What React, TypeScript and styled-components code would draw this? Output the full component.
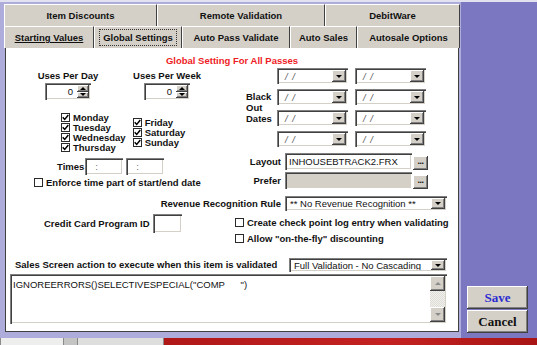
import React from "react";
import styled, { createGlobalStyle } from "styled-components";

const GlobalStyle = createGlobalStyle`
  html, body {
    margin: 0;
    padding: 0;
  }
  body {
    width: 537px;
    height: 345px;
    overflow: hidden;
    background: #7b77c0;
    font-family: "Liberation Sans", Arial, sans-serif;
    font-size: 9.5px;
    color: #111;
  }
`;

const raised = `
  background: #d4d0c8;
  box-shadow: inset -1px -1px #404040, inset 1px 1px #ffffff, inset -2px -2px #808080;
`;

const sunken = `
  background: #ffffff;
  box-shadow: inset 1px 1px #808080, inset 2px 2px #404040, inset -1px -1px #ffffff, inset -2px -2px #d4d0c8;
`;

const Screen = styled.div`
  width: 537px;
  height: 345px;
  display: flex;
  flex-direction: column;
  background: #7b77c0;
`;

const TopLine = styled.div`
  height: 2px;
  background: #e2e1ef;
`;

const Main = styled.div`
  height: 336px;
  display: flex;
`;

const Frame = styled.div`
  width: 461px;
  box-sizing: border-box;
  padding: 2px 0 0 4px;
  background: #aeacdb;
  display: flex;
  flex-direction: column;
`;

const TabRow = styled.div`
  display: flex;
  height: 22px;
  width: 456px;
`;

const Tab = styled.div<{ $w: number }>`
  width: ${(p) => p.$w}px;
  box-sizing: border-box;
  display: flex;
  align-items: center;
  justify-content: center;
  background: #d4d0c8;
  border-top: 1px solid #ffffff;
  border-left: 1px solid #ffffff;
  border-right: 1px solid #404040;
  font-weight: bold;
  white-space: nowrap;
`;

const TabText = styled.span<{ $underline?: boolean; $focus?: boolean }>`
  text-decoration: ${(p) => (p.$underline ? "underline" : "none")};
  border: 1px dotted ${(p) => (p.$focus ? "#333" : "transparent")};
  padding: 2px 3px;
`;

const Panel = styled.div`
  margin-left: 1px;
  width: 454px;
  height: 284px;
  box-sizing: border-box;
  background: #ffffff;
  border-left: 1px solid #404040;
  border-right: 1px solid #404040;
  border-bottom: 1px solid #404040;
  display: flex;
  flex-direction: column;
`;

const Title = styled.div`
  padding-top: 7px;
  line-height: 12px;
  text-align: center;
  color: #ee1c25;
  font-weight: bold;
`;

const TopGrid = styled.div`
  display: grid;
  grid-template-columns: 236px 1fr;
  height: 129px;
`;

const Column = styled.div`
  display: flex;
  flex-direction: column;
`;

const UsesRow = styled.div`
  display: flex;
  gap: 19px;
  padding: 3px 0 0 22px;
`;

const UsesGroup = styled.div`
  width: 80px;
  display: flex;
  flex-direction: column;
  align-items: center;
`;

const Label = styled.span`
  font-weight: bold;
  line-height: 12px;
  white-space: nowrap;
`;

const Spinner = styled.div`
  margin-top: 1px;
  width: 46px;
  height: 17px;
  box-sizing: border-box;
  ${sunken}
  display: flex;
  padding: 2px;
`;

const SpinValue = styled.span`
  flex: 1;
  text-align: right;
  padding-right: 4px;
  line-height: 13px;
`;

const SpinButtons = styled.div`
  width: 12px;
  display: flex;
  flex-direction: column;
`;

const SpinButton = styled.div`
  flex: 1;
  ${raised}
  display: flex;
  align-items: center;
  justify-content: center;
`;

const Arrow = styled.span<{ $dir: "up" | "down"; $color?: string }>`
  width: 0;
  height: 0;
  border-left: 3px solid transparent;
  border-right: 3px solid transparent;
  ${(p) =>
    p.$dir === "up"
      ? `border-bottom: 3px solid ${p.$color ?? "#000"};`
      : `border-top: 3px solid ${p.$color ?? "#000"};`}
`;

const DaysRow = styled.div`
  display: flex;
  gap: 7px;
  padding-left: 55px;
  margin-top: 12px;
`;

const DayColumn = styled.div<{ $offset?: number }>`
  display: flex;
  flex-direction: column;
  padding-top: ${(p) => p.$offset ?? 0}px;
`;

const CheckLine = styled.div<{ $h?: number }>`
  display: flex;
  align-items: center;
  gap: 3px;
  height: ${(p) => p.$h ?? 10}px;
  font-weight: bold;
  white-space: nowrap;
`;

const CheckBox = styled.span`
  width: 9px;
  height: 9px;
  box-sizing: border-box;
  border: 1px solid #2a2a2a;
  background: #ffffff;
  flex: none;
  display: flex;
  align-items: center;
  justify-content: center;
`;

const TimesRow = styled.div`
  display: flex;
  align-items: center;
  height: 17px;
  margin-top: 6px;
  padding-left: 51px;
`;

const TimeBox = styled.div<{ $gap: number }>`
  margin-left: ${(p) => p.$gap}px;
  width: 38px;
  height: 17px;
  box-sizing: border-box;
  ${sunken}
  color: #6a6a6a;
  line-height: 17px;
  padding-left: 10px;
`;

const EnforceRow = styled.div`
  margin-top: 1px;
  padding-left: 28px;
`;

const DatesBlock = styled.div`
  display: flex;
  align-items: center;
  margin-top: 1px;
  padding-left: 4px;
`;

const DatesLabel = styled.div`
  width: 31px;
  font-weight: bold;
  line-height: 11px;
`;

const DateGrid = styled.div`
  display: grid;
  grid-template-columns: 71px 71px;
  grid-auto-rows: 16px;
  column-gap: 7px;
  row-gap: 5px;
`;

const Combo = styled.div<{ $w?: number; $h?: number }>`
  width: ${(p) => (p.$w ? `${p.$w}px` : "auto")};
  height: ${(p) => p.$h ?? 16}px;
  box-sizing: border-box;
  ${sunken}
  display: flex;
  padding: 2px;
`;

const ComboText = styled.span<{ $muted?: boolean }>`
  flex: 1;
  padding-left: ${(p) => (p.$muted ? 6 : 3)}px;
  color: ${(p) => (p.$muted ? "#555" : "#111")};
  font-style: ${(p) => (p.$muted ? "italic" : "normal")};
  letter-spacing: ${(p) => (p.$muted ? "1px" : "0")};
  display: flex;
  align-items: center;
  white-space: nowrap;
  overflow: hidden;
`;

const DropButton = styled.div`
  width: 14px;
  ${raised}
  display: flex;
  align-items: center;
  justify-content: center;
`;

const FileRows = styled.div`
  display: flex;
  flex-direction: column;
  gap: 2px;
  margin-top: 6px;
`;

const FileRow = styled.div`
  display: flex;
  align-items: flex-end;
  height: 17px;
`;

const FileLabel = styled.span`
  width: 39px;
  margin-right: 4px;
  text-align: right;
  font-weight: bold;
  align-self: center;
`;

const FileInput = styled.div<{ $disabled?: boolean }>`
  width: 127px;
  height: 17px;
  box-sizing: border-box;
  ${sunken}
  background: ${(p) => (p.$disabled ? "#d4d0c8" : "#ffffff")};
  padding-left: 4px;
  line-height: 17px;
  white-space: nowrap;
`;

const BrowseButton = styled.div`
  margin-left: 1px;
  width: 15px;
  height: 14px;
  box-sizing: border-box;
  ${raised}
  font-weight: bold;
  font-size: 9px;
  line-height: 10px;
  text-align: center;
  letter-spacing: -0.5px;
`;

const RevenueRow = styled.div`
  display: flex;
  justify-content: flex-end;
  align-items: center;
  gap: 4px;
  height: 15px;
  padding-right: 11px;
`;

const CardRow = styled.div`
  display: flex;
  margin-top: 3px;
`;

const CardLeft = styled.div`
  width: 229px;
  box-sizing: border-box;
  padding-left: 38px;
  display: flex;
  gap: 3px;
`;

const CardLabel = styled.span`
  font-weight: bold;
  line-height: 19px;
`;

const IdBox = styled.div`
  width: 29px;
  height: 19px;
  ${sunken}
`;

const CardRight = styled.div`
  display: flex;
  flex-direction: column;
`;

const SalesRow = styled.div`
  display: flex;
  justify-content: space-between;
  align-items: center;
  height: 14px;
  margin-top: 12px;
  padding: 0 11px 0 9px;
`;

const ActionBox = styled.div`
  margin: 2px 0 0 4px;
  width: 437px;
  height: 50px;
  box-sizing: border-box;
  ${sunken}
  display: flex;
  padding: 2px;
`;

const ActionText = styled.div`
  flex: 1;
  padding: 3px 1px;
  white-space: pre;
`;

const ScrollBar = styled.div`
  width: 15px;
  display: flex;
  flex-direction: column;
  background: repeating-conic-gradient(#f2f1ee 0% 25%, #dedcd6 0% 50%) 0 0 / 2px 2px;
`;

const ScrollButton = styled.div<{ $push?: boolean }>`
  height: 15px;
  margin-top: ${(p) => (p.$push ? "auto" : "0")};
  ${raised}
  display: flex;
  align-items: center;
  justify-content: center;
`;

const SidePane = styled.div`
  flex: 1;
  display: flex;
  flex-direction: column;
  justify-content: flex-end;
  gap: 1px;
  padding: 0 0 5px 6px;
`;

const ActionButton = styled.button<{ $color: string }>`
  width: 61px;
  height: 23px;
  border: none;
  padding: 0;
  ${raised}
  font-family: "Liberation Serif", "Times New Roman", serif;
  font-weight: bold;
  font-size: 13px;
  color: ${(p) => p.$color};
`;

const BottomStrip = styled.div`
  height: 7px;
  display: flex;
`;

const StripPart = styled.div<{ $w?: number; $bg: string }>`
  ${(p) => (p.$w ? `width: ${p.$w}px;` : "flex: 1;")}
  background: ${(p) => p.$bg};
  border-left: 1px solid #8a8a8a;
`;

const Check = ({ children, h }: { children: React.ReactNode; h?: number }) => (
  <CheckLine $h={h}>
    <CheckBox />
    <span>{children}</span>
  </CheckLine>
);

const Checked = ({ children }: { children: React.ReactNode }) => (
  <CheckLine>
    <CheckBox>
      <svg width="7" height="7" viewBox="0 0 7 7">
        <path d="M0.7 3.3 L2.7 5.4 L6.3 1.1" fill="none" stroke="#000" strokeWidth="1.5" />
      </svg>
    </CheckBox>
    <span>{children}</span>
  </CheckLine>
);

const Select = ({ text, w, h, muted }: { text: string; w: number; h?: number; muted?: boolean }) => (
  <Combo $w={w} $h={h}>
    <ComboText $muted={muted}>{text}</ComboText>
    <DropButton>
      <Arrow $dir="down" />
    </DropButton>
  </Combo>
);

const row1 = [
  { label: "Item Discounts", w: 153 },
  { label: "Remote Validation", w: 168 },
  { label: "DebitWare", w: 135 },
];

const row2 = [
  { label: "Starting Values", w: 90, underline: true },
  { label: "Global Settings", w: 88, focus: true },
  { label: "Auto Pass Validate", w: 108 },
  { label: "Auto Sales", w: 67 },
  { label: "Autosale Options", w: 103 },
];

export default function App() {
  return (
    <>
      <GlobalStyle />
      <Screen>
        <TopLine />
        <Main>
          <Frame>
            <TabRow>
              {row1.map((t) => (
                <Tab key={t.label} $w={t.w}>
                  <TabText>{t.label}</TabText>
                </Tab>
              ))}
            </TabRow>
            <TabRow>
              {row2.map((t) => (
                <Tab key={t.label} $w={t.w}>
                  <TabText $underline={t.underline} $focus={t.focus}>
                    {t.label}
                  </TabText>
                </Tab>
              ))}
            </TabRow>
            <Panel>
              <Title>Global Setting For All Passes</Title>
              <TopGrid>
                <Column>
                  <UsesRow>
                    {["Uses Per Day", "Uses Per Week"].map((l) => (
                      <UsesGroup key={l}>
                        <Label>{l}</Label>
                        <Spinner>
                          <SpinValue>0</SpinValue>
                          <SpinButtons>
                            <SpinButton>
                              <Arrow $dir="up" />
                            </SpinButton>
                            <SpinButton>
                              <Arrow $dir="down" />
                            </SpinButton>
                          </SpinButtons>
                        </Spinner>
                      </UsesGroup>
                    ))}
                  </UsesRow>
                  <DaysRow>
                    <DayColumn>
                      <Checked>Monday</Checked>
                      <Checked>Tuesday</Checked>
                      <Checked>Wednesday</Checked>
                      <Checked>Thursday</Checked>
                    </DayColumn>
                    <DayColumn $offset={5}>
                      <Checked>Friday</Checked>
                      <Checked>Saturday</Checked>
                      <Checked>Sunday</Checked>
                    </DayColumn>
                  </DaysRow>
                  <TimesRow>
                    <Label>Times</Label>
                    <TimeBox $gap={1}>:</TimeBox>
                    <TimeBox $gap={3}>:</TimeBox>
                  </TimesRow>
                  <EnforceRow>
                    <Check h={12}>Enforce time part of start/end date</Check>
                  </EnforceRow>
                </Column>
                <Column>
                  <DatesBlock>
                    <DatesLabel>
                      Black
                      <br />
                      Out
                      <br />
                      Dates
                    </DatesLabel>
                    <DateGrid>
                      {Array.from({ length: 8 }).map((_, i) => (
                        <Select key={i} text="/ /" w={71} muted />
                      ))}
                    </DateGrid>
                  </DatesBlock>
                  <FileRows>
                    <FileRow>
                      <FileLabel>Layout</FileLabel>
                      <FileInput>INHOUSEBTRACK2.FRX</FileInput>
                      <BrowseButton>...</BrowseButton>
                    </FileRow>
                    <FileRow>
                      <FileLabel>Prefer</FileLabel>
                      <FileInput $disabled />
                      <BrowseButton>...</BrowseButton>
                    </FileRow>
                  </FileRows>
                </Column>
              </TopGrid>
              <RevenueRow>
                <Label>Revenue Recognition Rule</Label>
                <Select text="** No Revenue Recognition **" w={162} h={15} />
              </RevenueRow>
              <CardRow>
                <CardLeft>
                  <CardLabel>Credit Card Program ID</CardLabel>
                  <IdBox />
                </CardLeft>
                <CardRight>
                  <Check h={16}>Create check point log entry when validating</Check>
                  <Check h={16}>Allow "on-the-fly" discounting</Check>
                </CardRight>
              </CardRow>
              <SalesRow>
                <Label>Sales Screen action to execute when this item is validated</Label>
                <Select text="Full Validation - No Cascading" w={158} h={14} />
              </SalesRow>
              <ActionBox>
                <ActionText>{'IGNOREERRORS()SELECTIVESPECIAL("COMP      ")'}</ActionText>
                <ScrollBar>
                  <ScrollButton>
                    <Arrow $dir="up" $color="#8a8a8a" />
                  </ScrollButton>
                  <ScrollButton $push>
                    <Arrow $dir="down" $color="#8a8a8a" />
                  </ScrollButton>
                </ScrollBar>
              </ActionBox>
            </Panel>
          </Frame>
          <SidePane>
            <ActionButton $color="#2a2ad0">Save</ActionButton>
            <ActionButton $color="#111">Cancel</ActionButton>
          </SidePane>
        </Main>
        <BottomStrip>
          <StripPart $w={62} $bg="#eeeeee" />
          <StripPart $w={13} $bg="#c4c4c4" />
          <StripPart $w={85} $bg="#dedede" />
          <StripPart $bg="linear-gradient(90deg, #b01818, #c42222 60%, #a81414)" />
        </BottomStrip>
      </Screen>
    </>
  );
}
